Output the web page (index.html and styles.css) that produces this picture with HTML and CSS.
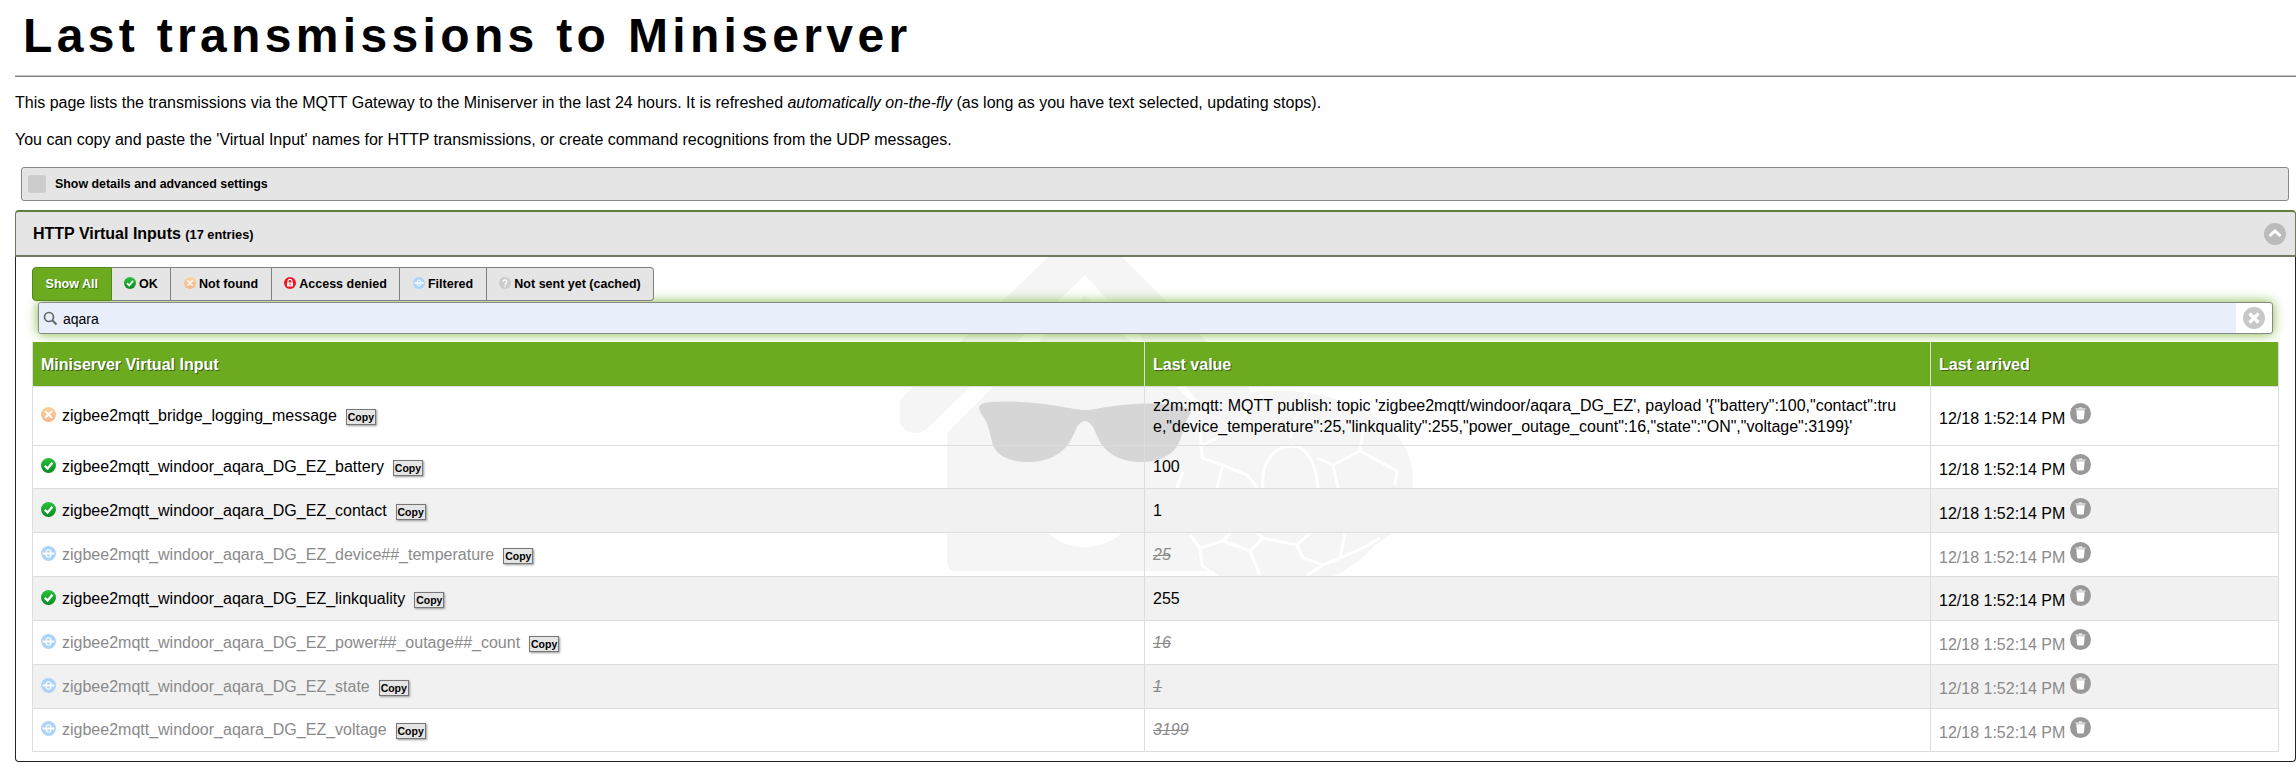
FILE: index.html
```html
<!DOCTYPE html>
<html lang="en">
<head>
<meta charset="utf-8">
<title>Last transmissions to Miniserver</title>
<link rel="stylesheet" href="styles.css">
</head>
<body>
<svg class="defs" width="0" height="0" aria-hidden="true">
  <defs>
    <linearGradient id="g-ok" x1="0" y1="0" x2="0" y2="1"><stop offset="0" stop-color="#2cc23c"/><stop offset="1" stop-color="#068a22"/></linearGradient>
    <linearGradient id="g-nf" x1="0" y1="0" x2="0" y2="1"><stop offset="0" stop-color="#f9d29c"/><stop offset="1" stop-color="#f7b48c"/></linearGradient>
    <symbol id="i-ok" viewBox="0 0 16 16"><circle cx="8" cy="8" r="8" fill="url(#g-ok)"/><path d="M4 8.2l3 3 5.2-6.2" fill="none" stroke="#fff" stroke-width="2.4"/></symbol>
    <symbol id="i-nf" viewBox="0 0 16 16"><circle cx="8" cy="8" r="8" fill="url(#g-nf)"/><path d="M5 5l6 6M11 5l-6 6" fill="none" stroke="#fff" stroke-width="2.2" stroke-linecap="round"/></symbol>
    <symbol id="i-ad" viewBox="0 0 16 16"><circle cx="8" cy="8" r="8" fill="#ee1528"/><path d="M5.4 7.5V5.8a2.6 2.6 0 0 1 5.2 0v1.7" fill="none" stroke="#fff" stroke-width="1.5"/><rect x="4" y="7.2" width="8" height="5.6" rx=".8" fill="#fff"/><rect x="7.3" y="8.6" width="1.4" height="2.6" fill="#ee1528"/></symbol>
    <symbol id="i-fi" viewBox="0 0 16 16"><circle cx="8" cy="8" r="8" fill="#aed3fa"/><path d="M2.6 8h10.800" stroke="#fff" stroke-width="2.200" stroke-linecap="round"/><ellipse cx="8" cy="8" rx="2.600" ry="4" fill="none" stroke="#fff" stroke-width="1.300"/></symbol>
    <symbol id="i-ns" viewBox="0 0 16 16"><circle cx="8" cy="8" r="8" fill="#ccc"/><path d="M5.6 6.2a2.4 2.4 0 1 1 3.6 2.1c-.8.5-1.2.9-1.2 1.9" fill="none" stroke="#fff" stroke-width="1.7"/><circle cx="8" cy="12.4" r="1.1" fill="#fff"/></symbol>
    <symbol id="i-trash" viewBox="0 0 21 21"><circle cx="10.5" cy="10.5" r="10.5" fill="#999"/><path d="M6.3 7.2h8.4l-.8 8.2a1.2 1.2 0 0 1-1.2 1H8.300a1.200 1.200 0 0 1-1.200-1z" fill="#fff"/><path d="M5.500 5.600h10v1h-10z" fill="#fff"/><path d="M9 4.400h3v1.200H9z" fill="#fff"/></symbol>
  </defs>
</svg>

<h1 class="title">Last transmissions to Miniserver</h1>
<hr class="rule">
<p class="intro">This page lists the transmissions via the MQTT Gateway to the Miniserver in the last 24 hours. It is refreshed <em>automatically on-the-fly</em> (as long as you have text selected, updating stops).</p>
<p class="intro">You can copy and paste the 'Virtual Input' names for HTTP transmissions, or create command recognitions from the UDP messages.</p>

<label class="details">
  <span class="checkbox"></span>
  <span>Show details and advanced settings</span>
</label>

<section class="panel">
  <header class="panel-head">
    <h2 class="panel-title">HTTP Virtual Inputs <small>(17 entries)</small></h2>
    <span class="collapse-btn">
      <svg width="22" height="22" viewBox="0 0 22 22"><circle cx="11" cy="11" r="11" fill="#bbb"/><path d="M5.500 13l5.500-5 5.500 5" fill="none" stroke="#fff" stroke-width="3"/></svg>
    </span>
  </header>
  <div class="panel-body">
    <svg class="watermark" viewBox="900 257 540 340" width="540" height="340" aria-hidden="true">
      <path d="M1047 258 L1085 216 L1123 258 L1243 378 Q1258 398 1248 418 Q1232 436 1215 420 L1085 275 L928 428 Q912 440 900 424 Q892 404 908 392z" fill="#f5f5f5"/>
      <path d="M947 433 L1085 296 L1223 433 V571 H957 Q947 571 947 561z" fill="#f5f5f5"/>
      <path d="M1180 420 C1230 380 1330 380 1385 425 Q1413 445 1413 480 C1413 510 1395 535 1375 545 C1350 575 1300 595 1255 590 C1220 585 1195 560 1185 530z" fill="#f5f5f5"/>
      <g fill="none" stroke="#fff" stroke-width="3">
        <path d="M1263 395 L1230 431 L1203 445"/>
        <path d="M1200 425 L1202 458 L1223 465 L1217 488"/>
        <path d="M1223 465 L1247 475 L1258 488"/>
        <path d="M1183 471 L1177 488"/>
        <path d="M1263 488 C1260 458 1278 446 1292 446 C1308 446 1316 465 1318 488"/>
        <path d="M1317 458 L1333 465 L1338 488"/>
        <path d="M1333 465 L1360 451 L1397 471 L1395 485"/>
        <path d="M1307 391 L1290 438"/>
        <path d="M1360 451 L1363 432"/>
        <path d="M1190 535 L1200 548 L1202 565 L1213 575"/>
        <path d="M1200 548 L1223 541 L1230 533"/>
        <path d="M1223 541 L1250 551 L1260 575"/>
        <path d="M1250 551 L1263 538 L1257 533"/>
        <path d="M1263 538 L1297 545 L1303 558 L1323 565 L1340 558 L1363 548 L1380 538"/>
        <path d="M1323 565 L1307 575"/>
        <path d="M1297 545 L1310 533"/>
        <path d="M1340 558 L1345 533"/>
      </g>
      <path d="M1032 500 H1138 C1135 530 1110 547 1085 547 C1060 547 1035 530 1032 500z" fill="#fff"/>
      <path d="M979 408 Q979 403 990 402 C1020 400 1050 404 1075 409 Q1085 411 1095 409 C1120 404 1160 400 1187 408 Q1192 411 1190 414 C1183 425 1183 435 1178 445 C1170 458 1155 462 1140 462 C1120 462 1105 452 1099 440 L1093 427 Q1085 415 1077 427 L1071 440 C1063 455 1045 462 1030 462 C1010 462 998 457 993 445 C990 435 988 420 981 414z" fill="#d6d6d6"/>
    </svg>

    <div class="content">
      <nav class="tabs">
        <span class="tab tab-on">Show All</span>
        <span class="tab"><svg class="tab-ico"><use href="#i-ok"/></svg> OK</span>
        <span class="tab"><svg class="tab-ico"><use href="#i-nf"/></svg> Not found</span>
        <span class="tab"><svg class="tab-ico"><use href="#i-ad"/></svg> Access denied</span>
        <span class="tab"><svg class="tab-ico"><use href="#i-fi"/></svg> Filtered</span>
        <span class="tab"><svg class="tab-ico"><use href="#i-ns"/></svg> Not sent yet (cached)</span>
      </nav>

      <div class="search">
        <div class="search-field">
          <svg class="search-ico" width="15" height="15" viewBox="0 0 15 15"><circle cx="6" cy="6" r="4.500" fill="none" stroke="#666" stroke-width="1.700"/><path d="M9.500 9.500l4 4" stroke="#666" stroke-width="2"/></svg>
          <span>aqara</span>
        </div>
        <span class="search-clear">
          <svg width="22" height="22" viewBox="0 0 22 22"><circle cx="11" cy="11" r="11" fill="#c8c8c8"/><path d="M6.500 6.500l9 9M15.500 6.500l-9 9" stroke="#fff" stroke-width="3.200"/></svg>
        </span>
      </div>

      <table class="grid">
        <colgroup><col class="c-name"><col class="c-val"><col class="c-time"></colgroup>
        <thead>
          <tr><th>Miniserver Virtual Input</th><th>Last value</th><th>Last arrived</th></tr>
        </thead>
        <tbody>
          <tr class="tall">
            <td><svg class="st"><use href="#i-nf"/></svg><span class="nm">zigbee2mqtt_bridge_logging_message</span><button class="copy">Copy</button></td>
            <td>z2m:mqtt: MQTT publish: topic 'zigbee2mqtt/windoor/aqara_DG_EZ', payload '{"battery":100,"contact":true,"device_temperature":25,"linkquality":255,"power_outage_count":16,"state":"ON","voltage":3199}'</td>
            <td>12/18 1:52:14 PM<svg class="trash"><use href="#i-trash"/></svg></td>
          </tr>
          <tr>
            <td><svg class="st"><use href="#i-ok"/></svg><span class="nm">zigbee2mqtt_windoor_aqara_DG_EZ_battery</span><button class="copy">Copy</button></td>
            <td>100</td>
            <td>12/18 1:52:14 PM<svg class="trash"><use href="#i-trash"/></svg></td>
          </tr>
          <tr class="alt">
            <td><svg class="st"><use href="#i-ok"/></svg><span class="nm">zigbee2mqtt_windoor_aqara_DG_EZ_contact</span><button class="copy">Copy</button></td>
            <td>1</td>
            <td>12/18 1:52:14 PM<svg class="trash"><use href="#i-trash"/></svg></td>
          </tr>
          <tr class="off">
            <td><svg class="st"><use href="#i-fi"/></svg><span class="nm">zigbee2mqtt_windoor_aqara_DG_EZ_device##_temperature</span><button class="copy">Copy</button></td>
            <td><s>25</s></td>
            <td>12/18 1:52:14 PM<svg class="trash"><use href="#i-trash"/></svg></td>
          </tr>
          <tr class="alt">
            <td><svg class="st"><use href="#i-ok"/></svg><span class="nm">zigbee2mqtt_windoor_aqara_DG_EZ_linkquality</span><button class="copy">Copy</button></td>
            <td>255</td>
            <td>12/18 1:52:14 PM<svg class="trash"><use href="#i-trash"/></svg></td>
          </tr>
          <tr class="off">
            <td><svg class="st"><use href="#i-fi"/></svg><span class="nm">zigbee2mqtt_windoor_aqara_DG_EZ_power##_outage##_count</span><button class="copy">Copy</button></td>
            <td><s>16</s></td>
            <td>12/18 1:52:14 PM<svg class="trash"><use href="#i-trash"/></svg></td>
          </tr>
          <tr class="alt off">
            <td><svg class="st"><use href="#i-fi"/></svg><span class="nm">zigbee2mqtt_windoor_aqara_DG_EZ_state</span><button class="copy">Copy</button></td>
            <td><s>1</s></td>
            <td>12/18 1:52:14 PM<svg class="trash"><use href="#i-trash"/></svg></td>
          </tr>
          <tr class="off">
            <td><svg class="st"><use href="#i-fi"/></svg><span class="nm">zigbee2mqtt_windoor_aqara_DG_EZ_voltage</span><button class="copy">Copy</button></td>
            <td><s>3199</s></td>
            <td>12/18 1:52:14 PM<svg class="trash"><use href="#i-trash"/></svg></td>
          </tr>
        </tbody>
      </table>
    </div>
  </div>
</section>
</body>
</html>
```

FILE: styles.css
```css
* { box-sizing: border-box; }
html, body { margin: 0; padding: 0; background: #fff; }
body { font-family: "Liberation Sans", Arial, sans-serif; color: #000; overflow: hidden; height: 767px; }
.defs { position: absolute; }

.title { margin: 0 0 0 23px; height: 75px; padding-top: 8px; font-size: 48px; line-height: 56px; font-weight: 700; letter-spacing: 4.340px; }
.rule { margin: 0 0 0 15px; height: 2px; border: 0; border-top: 1px solid #c4c4c4; border-bottom: 1px solid #808080; }

.intro { margin: 0 0 0 15px; font-size: 16px; line-height: 20px; padding-top: 17px; }
.intro:first-of-type { padding-top: 16px; }

.details { display: flex; align-items: center; gap: 9px; height: 34px; margin: 17px 7px 0 21px; padding-left: 6px; background: #e5e5e5; border: 1px solid #888; border-radius: 3px; font-size: 12.400px; font-weight: 700; }
.checkbox { width: 18px; height: 18px; background: #ccc; border-radius: 3px; }

.panel { margin: 9px 0 0 15px; width: 2281px; }
.panel-head { display: flex; align-items: center; justify-content: space-between; height: 47px; padding: 0 9px 0 17px; background: #e5e5e5; border: 1px solid #6d7a5e; border-top: 2px solid #5f7f3a; border-bottom: 2px solid #6f7a60; border-radius: 4px 4px 0 0; }
.panel-title { margin: 0; font-size: 16px; font-weight: 700; }
.panel-title small { font-size: 12.800px; }
.collapse-btn { display: flex; }

.panel-body { position: relative; height: 505px; overflow: hidden; border: 1px solid #222; border-top: 0; border-radius: 0 0 4px 4px; }
.watermark { position: absolute; left: 884px; top: 0; }
.content { position: relative; padding: 10px 16px 0 16px; }

.tabs { display: inline-flex; height: 34px; position: relative; z-index: 2; }
.tab { display: flex; align-items: center; gap: 3px; height: 34px; padding: 0 12.600px; background: #e5e5e5; border: 1px solid #808080; border-left: 0; font-size: 12.500px; font-weight: 700; }
.tab:last-child { border-radius: 0 4px 4px 0; }
.tab-on { background: #6cab20; border: 1px solid #4f8a1a; border-radius: 4px 0 0 4px; color: #fff; text-shadow: 1px 1px 0 #3d6b10; }
.tab-ico { width: 12px; height: 12px; margin-top: -3px; }

.search { display: flex; align-items: stretch; height: 32px; margin: 1px 6px 8px 6px; background: #fff; border: 1px solid #888; border-radius: 3px; box-shadow: 0 0 12px #7fb53a; }
.search-field { flex: 1; display: flex; align-items: center; gap: 5px; padding: 1px 0 0 4px; background: #e8effb; border-radius: 3px 0 0 3px; font-size: 14px; }
.search-clear { display: flex; align-items: center; justify-content: center; width: 36px; }

.grid { width: 2246px; table-layout: fixed; border-collapse: collapse; font-size: 16px; line-height: 21px; }
.c-name { width: 1112px; }
.c-val { width: 786px; }
.c-time { width: 348px; }
.grid th { height: 44px; padding: 1px 8px 0; background: #6cab20; color: #fff; border: 1px solid #ddd; border-top: 0; font-size: 16px; font-weight: 700; text-align: left; text-shadow: 1px 1px 0 #3d5f1a; }
.grid td { height: 43.850px; padding: 0 8px; border: 1px solid #ddd; vertical-align: middle; word-break: break-all; }
.grid tr.tall td { height: 59px; }
.grid tr.alt td { background: #f1f1f1; }
.grid tr.off td { color: #8a8a8a; }
.grid s { font-style: italic; }

.st { width: 15px; height: 15px; margin-right: 6px; vertical-align: -1px; }
.copy { margin: 0 0 0 9px; width: 30px; height: 16px; padding: 0; background: #e5e5e5; border: 1px solid #777; border-radius: 0; box-shadow: 1px 1px 2px #999; font: 700 10.500px "Liberation Sans", Arial, sans-serif; color: #000; vertical-align: 0; }
.trash { width: 21px; height: 21px; margin-left: 5px; vertical-align: baseline; }
```
